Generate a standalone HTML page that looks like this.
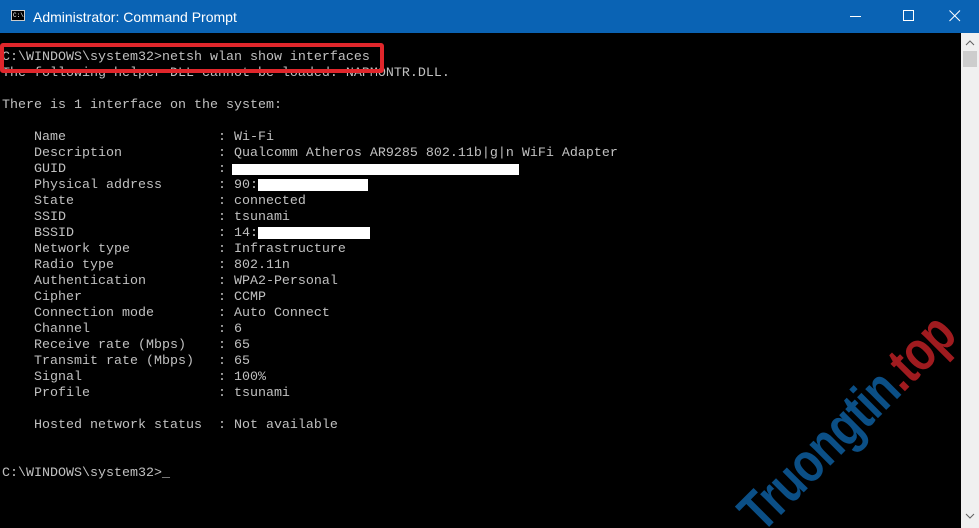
<!DOCTYPE html>
<html><head><style>
html,body{margin:0;padding:0;width:979px;height:528px;overflow:hidden;background:#000;}
#root{position:relative;width:979px;height:528px;overflow:hidden;}
.title{position:absolute;left:0;top:0;width:979px;height:33px;background:#0a63b4;color:#fff;font:14px "Liberation Sans",sans-serif;}
.title .t{position:absolute;left:33px;top:9px;}
.ico{position:absolute;left:11px;top:10px;width:14px;height:11px;background:#000;border:1px solid #ccc;box-sizing:border-box;}
.ico span{position:absolute;left:1px;top:1px;font:6px "Liberation Mono",monospace;color:#fff;}
.term{position:absolute;left:0;top:33px;width:961px;height:495px;background:#000;}
pre{position:absolute;left:2px;top:50px;margin:0;font:13.33px/16px "Liberation Mono",monospace;color:#c0c0c0;}
.sb{position:absolute;left:961px;top:33px;width:18px;height:495px;background:#f0f0f0;}
.box{position:absolute;border:4px solid #e0262b;border-radius:3px;left:0;top:43px;width:376px;height:22px;}
.w{position:absolute;background:#fff;}
.wm{position:absolute;left:748px;top:488px;transform:rotate(-45deg) scaleX(0.8);transform-origin:left center;font:bold 56px "Liberation Sans Narrow","Liberation Sans",sans-serif;color:#0b4f86;white-space:nowrap;letter-spacing:-1px;}
.wm b{color:#a01b1f;}
</style></head><body><div id="root">
<div class="title"><div class="ico"><span>C:\</span></div><div class="t">Administrator: Command Prompt</div>
<svg style="position:absolute;left:850px;top:10px" width="12" height="12"><path d="M0 6.5H11" stroke="#fff"/></svg>
<svg style="position:absolute;left:903px;top:10px" width="12" height="12"><rect x="0.5" y="0.5" width="10" height="10" fill="none" stroke="#fff"/></svg>
<svg style="position:absolute;left:949px;top:10px" width="12" height="12"><path d="M0.5 0.5L11 11M11 0.5L0.5 11" stroke="#fff"/></svg>
</div>
<div class="term"></div>
<div class="wm">Truongtin<b>.top</b></div>
<div class="sb"><div style="position:absolute;left:2px;top:18px;width:14px;height:16px;background:#cdcdcd"></div>
<svg style="position:absolute;left:4px;top:7px" width="10" height="6"><path d="M1 5L5 1L9 5" stroke="#606060" fill="none"/></svg>
<svg style="position:absolute;left:4px;top:480px" width="10" height="6"><path d="M1 1L5 5L9 1" stroke="#606060" fill="none"/></svg></div>
<pre>C:\WINDOWS\system32>netsh wlan show interfaces
The following helper DLL cannot be loaded: NAPMONTR.DLL.

There is 1 interface on the system:

    Name                   : Wi-Fi
    Description            : Qualcomm Atheros AR9285 802.11b|g|n WiFi Adapter
    GUID                   : 
    Physical address       : 90:
    State                  : connected
    SSID                   : tsunami
    BSSID                  : 14:c
    Network type           : Infrastructure
    Radio type             : 802.11n
    Authentication         : WPA2-Personal
    Cipher                 : CCMP
    Connection mode        : Auto Connect
    Channel                : 6
    Receive rate (Mbps)    : 65
    Transmit rate (Mbps)   : 65
    Signal                 : 100%
    Profile                : tsunami

    Hosted network status  : Not available


C:\WINDOWS\system32>_</pre>
<div class="box"></div>
<div class="w" style="left:232px;top:164px;width:287px;height:11px"></div>
<div class="w" style="left:258px;top:179px;width:110px;height:12px"></div>
<div class="w" style="left:258px;top:227px;width:112px;height:12px"></div>
</div></body></html>
